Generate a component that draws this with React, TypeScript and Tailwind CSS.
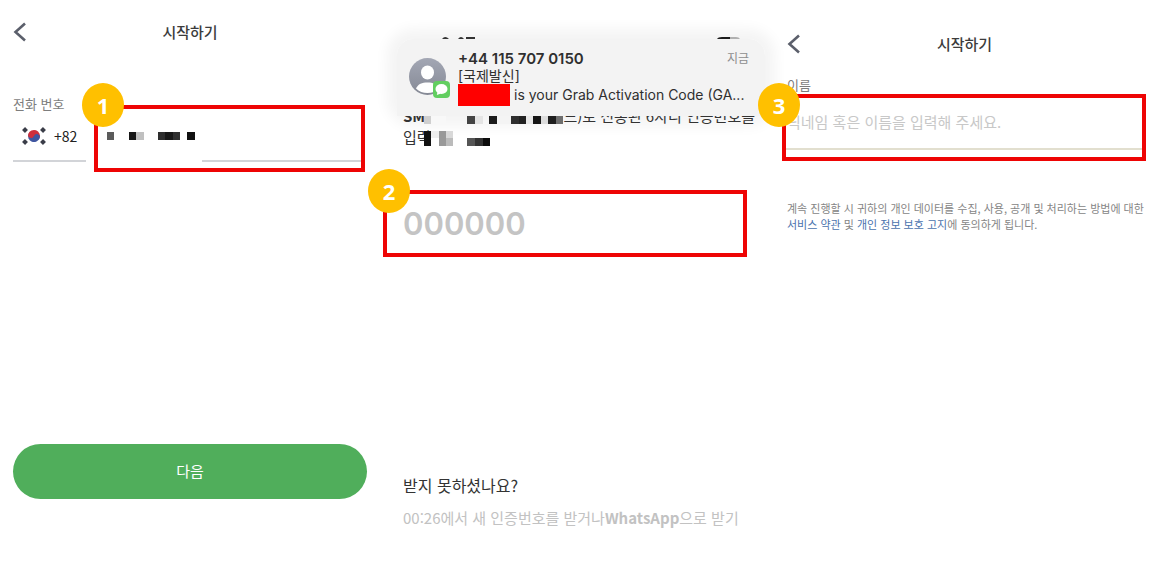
import { ReactNode, useState } from "react";

const KR = "font-['Noto_Sans_CJK_KR',sans-serif]";
const INTER = "font-[Inter,'Noto_Sans_CJK_KR',sans-serif]";

// x, width, fill
type Cell = [number, number, string];

const PHONE_MASK: Cell[] = [
  [0, 7, "#5b5b5b"],
  [22, 7, "#161616"],
  [29, 8, "#c0c0c0"],
  [51, 7, "#2e2e2e"],
  [58, 8, "#181818"],
  [66, 7, "#303030"],
  [80, 8, "#111111"],
];

const SMS_MASK: Cell[] = [
  [0, 7, "#cfcfcf"],
  [7, 15, "#f8f8f8"],
  [43, 8, "#444444"],
  [51, 8, "#e4e4e4"],
  [65, 8, "#1c1c1c"],
  [73, 14, "#f4f4f4"],
  [87, 8, "#2f2f2f"],
  [95, 7, "#222222"],
  [102, 7, "#e8e8e8"],
  [109, 8, "#161616"],
  [117, 7, "#dcdcdc"],
  [124, 8, "#1e1e1e"],
  [132, 7, "#6e6e6e"],
];

function Mask({ cells, width }: { cells: Cell[]; width: number }) {
  return (
    <svg width={width} height="8" aria-hidden="true" className="block shrink-0">
      {cells.map(([x, w, fill]) => (
        <rect key={x} x={x} width={w} height="8" fill={fill} />
      ))}
    </svg>
  );
}

interface StepProps {
  n: number;
  badge: string;
  className?: string;
  children: ReactNode;
}

function Step({ n, badge, className = "", children }: StepProps) {
  return (
    <div className={`relative h-[67px] min-w-0 border-4 border-[#ee0404] ${className}`}>
      {children}
      <span
        className={`absolute z-20 flex h-11 w-[42px] items-center justify-center rounded-[50%] bg-[#ffc000] font-['Open_Sans',sans-serif] text-[22px] font-bold text-white ${badge}`}
      >
        {n}
      </span>
    </div>
  );
}

function Header({ title }: { title: string }) {
  return (
    <header className="grid h-6 grid-cols-[1fr_auto_1fr] items-center">
      <button type="button" aria-label="뒤로" className="justify-self-start">
        <svg width="14" height="20" viewBox="0 0 14 20" fill="none" stroke="#5b5f6b" strokeWidth="2.6">
          <path d="M12 1.5 2.5 10 12 18.5" />
        </svg>
      </button>
      <h1 className="text-[15px] font-medium text-[#3c3c3c]">{title}</h1>
    </header>
  );
}

function KoreaFlag() {
  return (
    <svg width="24" height="18" viewBox="0 0 24 18" aria-hidden="true">
      <g transform="rotate(20 12 9)">
        <path d="M6 9a6 6 0 0 1 12 0z" fill="#cf2f3c" />
        <path d="M18 9a6 6 0 0 1-12 0z" fill="#3f56a0" />
        <circle cx="9" cy="9" r="3" fill="#cf2f3c" />
        <circle cx="15" cy="9" r="3" fill="#3f56a0" />
      </g>
      <g stroke="#3a3d48" strokeWidth="4">
        <path d="M1.5 4.5 4.5 1.5" />
        <path d="M19.5 1.5 22.5 4.5" />
        <path d="M1.5 13.5 4.5 16.5" />
        <path d="M19.5 16.5 22.5 13.5" />
      </g>
    </svg>
  );
}

function PhoneScreen() {
  return (
    <section className="pl-[13px] pr-4 pt-5">
      <Header title="시작하기" />
      <div className="mt-[50px] flex gap-2">
        <div className="flex w-[73px] shrink-0 flex-col">
          <label htmlFor="phone" className="text-[13px] leading-5 text-[#7d7d7d]">
            전화 번호
          </label>
          <button
            type="button"
            className="flex h-12 items-center gap-2 border-b-2 border-[#d2d4d8] pb-[2px] pl-[9px] text-sm text-[#222]"
          >
            <KoreaFlag />
            +82
          </button>
        </div>
        <Step n={1} badge="-left-4 -top-[26px]" className="mr-[2px] mt-[11px] flex-1">
          <div className="flex h-[53px] pl-[9px]">
            <div className="flex items-center">
              <Mask cells={PHONE_MASK} width={88} />
            </div>
            <input id="phone" type="tel" className="ml-[7px] min-w-0 flex-1 border-b-2 border-[#d2d4d8] outline-none" />
          </div>
        </Step>
      </div>
      <button type="button" className="mt-[272px] h-[55px] w-full rounded-full bg-[#50ae5b] text-[15px] text-white">
        다음
      </button>
    </section>
  );
}

function Notification() {
  return (
    <div className="relative ml-[14px] mr-2">
      <div className="absolute inset-0 rounded-2xl shadow-[0_0_14px_10px_#f4f4f4]" />
      <div className="relative z-10 flex h-[77px] items-start rounded-t-2xl bg-[#f3f3f3] pl-3 pr-4">
        <div className="relative mt-[19px] shrink-0">
          <svg width="37" height="37" viewBox="0 0 37 37" aria-hidden="true">
            <defs>
              <linearGradient id="avatar" x1="0" y1="0" x2="0" y2="1">
                <stop offset="0" stopColor="#a3a7b4" />
                <stop offset="1" stopColor="#858995" />
              </linearGradient>
            </defs>
            <circle cx="18.5" cy="18.5" r="18.5" fill="url(#avatar)" />
            <ellipse cx="18.5" cy="14.5" rx="6.5" ry="7" fill="#fff" />
            <path d="M7 30.5C9 26 13 24.500 18.500 24.500S28 26 30 30.500C27 33.500 23 35 18.500 35S10 33.500 7 30.500z" fill="#fff" />
          </svg>
          <svg width="17" height="17" viewBox="0 0 17 17" aria-hidden="true" className="absolute -bottom-[3px] -right-1">
            <rect width="17" height="17" rx="4" fill="#62ce60" />
            <ellipse cx="8.5" cy="8" rx="6" ry="5" fill="#fff" />
            <path d="M4.5 11 3.8 14 8 12.5z" fill="#fff" />
          </svg>
        </div>
        <div className={`ml-3 mt-[11px] min-w-0 flex-1 text-sm text-[#2f2f2f] ${INTER}`}>
          <div className="flex h-[18px] items-center justify-between">
            <strong className="text-[15px] font-semibold">+44 115 707 0150</strong>
            <time className="text-xs text-[#8e8e8e]">지금</time>
          </div>
          <p className="h-4 leading-4">[국제발신]</p>
          <p className="flex h-[22px] items-center whitespace-nowrap">
            <span className="mr-1 h-[22px] w-[52px] shrink-0 bg-[#ff0000]" />
            is your Grab Activation Code (GA...
          </p>
        </div>
      </div>
    </div>
  );
}

function CodeScreen() {
  return (
    <section className="pt-9">
      {/* tops of the clock and battery that stay visible over the banner */}
      <svg width="310" height="3" aria-hidden="true" className="relative z-10 ml-[57px] block">
        <path d="M2 3Q5-1 9 3z" fill="#333" />
        <path d="M18 3Q21-1 24 3z" fill="#333" />
        <rect x="26" y="1" width="9" height="2" fill="#333" />
        <path d="M277 3Q278 1 282 1H290V3z" fill="#1c1c1c" />
        <path d="M290 1H296Q299 1 300 3H290z" fill="#b0b0b0" />
      </svg>
      <Notification />
      {/* the first line is tucked halfway under the banner */}
      <div className="relative -mt-[9px] ml-5 mr-[18px] text-[15px] text-[#333]">
        <p className="flex justify-between whitespace-nowrap leading-[18px]">
          <b>SM</b>
          <span>드)로 전송된 6자리 인증번호를</span>
        </p>
        <p className="leading-6">입력</p>
        <div className="absolute left-[21px] top-[9px]">
          <Mask cells={SMS_MASK} width={140} />
        </div>
        <svg width="70" height="15" aria-hidden="true" className="absolute left-[21px] top-6">
          <rect width="7" height="15" fill="#111" />
          <rect x="7" width="8" height="7" fill="#eee" />
          <rect x="15" width="7" height="15" fill="#999" />
          <rect x="22" width="7" height="7" fill="#d8d8d8" />
          <rect x="22" y="7" width="7" height="8" fill="#bbb" />
          <rect x="43" y="7" width="8" height="8" fill="#555" />
          <rect x="51" y="7" width="8" height="8" fill="#333" />
          <rect x="59" y="7" width="7" height="8" fill="#0c0c0c" />
        </svg>
      </div>
      <Step n={2} badge="-left-[19px] -top-[25px]" className="mr-[26px] mt-[41px]">
        <input
          aria-label="인증번호"
          placeholder="000000"
          maxLength={6}
          className={`h-full w-full pl-4 text-[31px] font-semibold outline-none placeholder:text-[#c4c4c4] ${INTER}`}
        />
      </Step>
      <p className="ml-5 mt-[216px] text-base text-[#333]">받지 못하셨나요?</p>
      <p className="ml-5 mt-[9px] whitespace-nowrap text-[15px] leading-6 text-[#c2c2c2]">
        00:26에서 새 인증번호를 받거나<b>WhatsApp</b>으로 받기
      </p>
    </section>
  );
}

function NameScreen() {
  const [name, setName] = useState("");

  return (
    <section className="pl-[9px] pr-[7px] pt-8">
      <div className="pl-[5px] pr-1">
        <Header title="시작하기" />
        <label htmlFor="name" className="mt-[19px] block h-[19px] text-[13px] leading-5 text-[#7d7d7d]">
          이름
        </label>
      </div>
      <Step n={3} badge="-left-7 -top-[15px]">
        <input
          id="name"
          value={name}
          onChange={(e) => setName(e.target.value)}
          placeholder="닉네임 혹은 이름을 입력해 주세요."
          className="block h-[52px] w-full border-b-2 border-[#e2dfcf] pb-1 pl-px text-[15px] outline-none placeholder:text-[#c8c8c8]"
        />
      </Step>
      <p className="mt-[39px] whitespace-nowrap pl-[5px] text-[11px] leading-4 text-[#858585]">
        계속 진행할 시 귀하의 개인 데이터를 수집, 사용, 공개 및 처리하는 방법에 대한
        <br />
        <a href="#terms" className="text-[#4a72ad]">서비스 약관</a> 및{" "}
        <a href="#privacy" className="text-[#4a72ad]">개인 정보 보호 고지</a>에 동의하게 됩니다.
      </p>
    </section>
  );
}

export default function App() {
  return (
    <main
      lang="ko"
      className={`grid min-h-screen grid-cols-[minmax(0,383fr)_minmax(0,390fr)_minmax(0,380fr)] bg-white ${KR}`}
    >
      <PhoneScreen />
      <CodeScreen />
      <NameScreen />
    </main>
  );
}
